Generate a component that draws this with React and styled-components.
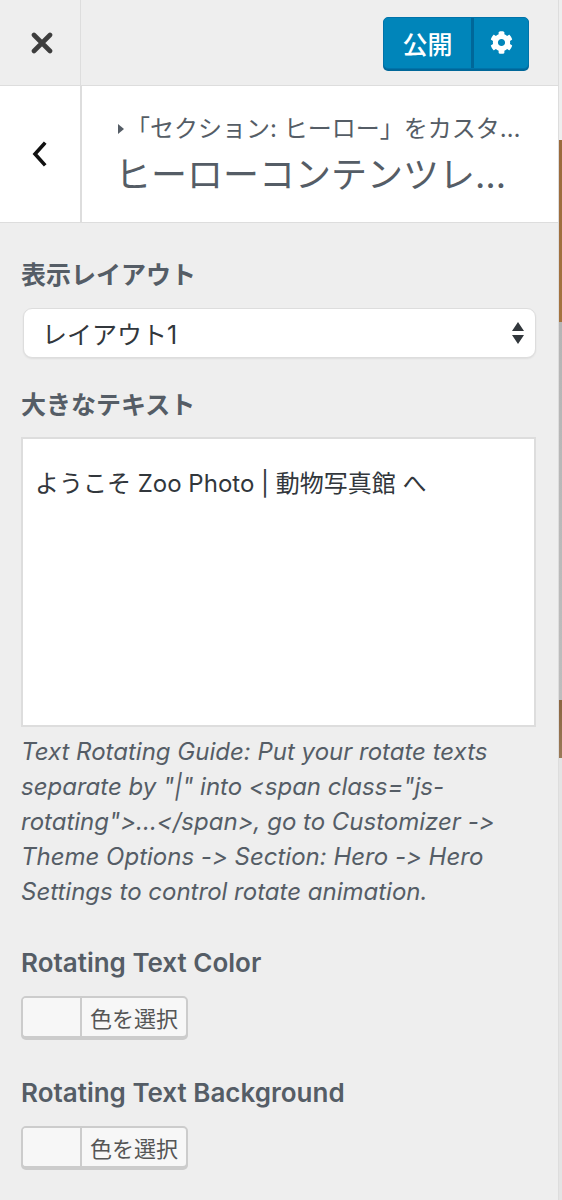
import styled, { createGlobalStyle } from "styled-components";
import { FaCog } from "react-icons/fa";

const GlobalStyle = createGlobalStyle`
  html, body {
    margin: 0;
    padding: 0;
    background: #eee;
  }
  body {
    font-family: "Inter", "Noto Sans CJK JP", sans-serif;
    font-feature-settings: "calt" 0, "liga" 0;
    color: #555d66;
  }
`;

const Screen = styled.div`
  display: flex;
  width: 562px;
  min-height: 1200px;
`;

const Panel = styled.div`
  width: 558px;
  border-right: 1px solid #ddd;
  background: #eee;
  display: flex;
  flex-direction: column;
`;

const PreviewEdge = styled.div`
  flex: 1;
  background: linear-gradient(
    to bottom,
    #eee 0,
    #eee 140px,
    #9a6a3c 140px,
    #a4733f 322px,
    #b5b5b5 322px,
    #bdbdbd 700px,
    #8a6540 700px,
    #9a7a58 758px,
    #e4e4e4 758px
  );
`;

const Header = styled.div`
  height: 85px;
  display: flex;
  align-items: center;
  border-bottom: 1px solid #ddd;
`;

const CloseButton = styled.div`
  width: 81px;
  height: 100%;
  border-right: 1px solid #ddd;
  display: flex;
  align-items: center;
  justify-content: center;
  padding-left: 3px;
  box-sizing: border-box;
  svg {
    display: block;
  }
`;

const PublishGroup = styled.div`
  margin-left: auto;
  margin-right: 29px;
  display: flex;
  height: 52px;
  border-radius: 5px;
  background: #0085ba;
  border: 1px solid #0073aa;
  box-shadow: 0 2px 0 #006799;
  box-sizing: border-box;
  overflow: hidden;
`;

const PublishButton = styled.div`
  width: 87px;
  display: flex;
  align-items: center;
  justify-content: center;
  color: #fff;
  font-size: 25px;
  font-weight: 500;
  border-right: 3px solid #006799;
`;

const GearButton = styled.div`
  width: 54px;
  display: flex;
  align-items: center;
  justify-content: center;
  color: #fff;
  font-size: 23px;
`;

const SectionHeader = styled.div`
  height: 136px;
  display: flex;
  background: #fff;
  border-bottom: 1px solid #ddd;
`;

const BackButton = styled.div`
  width: 80px;
  flex: none;
  border-right: 2px solid #ddd;
  display: flex;
  align-items: center;
  justify-content: center;
`;

const TitleBlock = styled.div`
  flex: 1;
  min-width: 0;
  padding: 24px 28px 0 33px;
`;

const Crumb = styled.div`
  display: flex;
  align-items: center;
  font-size: 24px;
  line-height: 38px;
  color: #555d66;
  white-space: nowrap;
  &::before {
    content: "";
    flex: none;
    border-left: 6px solid #555d66;
    border-top: 5px solid transparent;
    border-bottom: 5px solid transparent;
    margin: 0 2px 0 3px;
  }
  span {
    overflow: hidden;
    text-overflow: ellipsis;
  }
`;

const Title = styled.h3`
  margin: 0;
  padding-right: 12px;
  font-size: 36px;
  line-height: 54px;
  font-weight: 400;
  color: #555d66;
  white-space: nowrap;
  overflow: hidden;
  text-overflow: ellipsis;
`;

const Content = styled.div`
  padding: 30px 22px 40px 21px;
`;

const ControlTitle = styled.div`
  font-size: ${(p) => (p.$latin ? "26px" : "25px")};
  line-height: 44px;
  font-weight: 600;
  color: #555d66;
  margin-top: ${(p) => p.$top || 0}px;
`;

const SelectBox = styled.div`
  margin: 11px 0 0 2px;
  height: 50px;
  box-sizing: border-box;
  background: #fff;
  border: 1px solid #ddd;
  border-radius: 9px;
  box-shadow: 0 1px 2px rgba(0, 0, 0, 0.07);
  display: flex;
  align-items: center;
  padding: 0 10px 0 18px;
  font-size: 25px;
  color: #32373c;
  svg {
    margin-left: auto;
  }
`;

const TextArea = styled.div`
  margin-top: 10px;
  height: 290px;
  box-sizing: border-box;
  background: #fff;
  border: 2px solid #ddd;
  padding: 30px 12px;
  font-size: 24px;
  line-height: 30px;
  color: #32373c;
`;

const Description = styled.p`
  margin: 7px 0 0;
  font-size: 24px;
  line-height: 35px;
  font-style: italic;
  color: #555d66;
`;

const ColorPicker = styled.div`
  margin-top: 11px;
  display: inline-flex;
  height: 42px;
  box-sizing: border-box;
  background: #f7f7f7;
  border: 2px solid #ccc;
  border-radius: 5px;
  box-shadow: 0 2px 0 #ccc;
  overflow: hidden;
`;

const Swatch = styled.div`
  width: 57px;
  border-right: 2px solid #ccc;
  background: #f7f7f7;
`;

const PickLabel = styled.div`
  width: 104px;
  display: flex;
  align-items: center;
  justify-content: center;
  font-size: 22px;
  color: #555;
`;

const Field = styled.div`
  display: flex;
  flex-direction: column;
  align-items: ${(p) => (p.$inline ? "flex-start" : "stretch")};
`;

function CloseIcon() {
  return (
    <svg width="22" height="22" viewBox="0 0 22 22">
      <path d="M3 3 L19 19 M19 3 L3 19" stroke="#3d3d3d" strokeWidth="4.6" strokeLinecap="round" />
    </svg>
  );
}

function BackIcon() {
  return (
    <svg width="18" height="26" viewBox="0 0 18 26">
      <path d="M13 3 L4 13 L13 23" fill="none" stroke="#111" strokeWidth="3.6" strokeLinecap="square" />
    </svg>
  );
}

function SelectArrows() {
  return (
    <svg width="14" height="24" viewBox="0 0 14 24">
      <path d="M7 1 L13 10 L1 10 Z M1 14 L13 14 L7 23 Z" fill="#32373c" />
    </svg>
  );
}

function ColorControl({ label, top }) {
  return (
    <Field $inline>
      <ControlTitle $latin $top={top}>{label}</ControlTitle>
      <ColorPicker>
        <Swatch />
        <PickLabel>色を選択</PickLabel>
      </ColorPicker>
    </Field>
  );
}

export default function App() {
  return (
    <Screen>
      <GlobalStyle />
      <Panel>
        <Header>
          <CloseButton>
            <CloseIcon />
          </CloseButton>
          <PublishGroup>
            <PublishButton>公開</PublishButton>
            <GearButton>
              <FaCog />
            </GearButton>
          </PublishGroup>
        </Header>

        <SectionHeader>
          <BackButton>
            <BackIcon />
          </BackButton>
          <TitleBlock>
            <Crumb>
              <span>「セクション: ヒーロー」をカスタマイズ中</span>
            </Crumb>
            <Title>ヒーローコンテンツレイアウト</Title>
          </TitleBlock>
        </SectionHeader>

        <Content>
          <Field>
            <ControlTitle>表示レイアウト</ControlTitle>
            <SelectBox>
              レイアウト1
              <SelectArrows />
            </SelectBox>
          </Field>

          <Field>
            <ControlTitle $top={25}>大きなテキスト</ControlTitle>
            <TextArea>ようこそ Zoo Photo | 動物写真館 へ</TextArea>
            <Description>
              Text Rotating Guide: Put your rotate texts separate by "|" into
              &lt;span class="js-rotating"&gt;...&lt;/span&gt;, go to Customizer
              -&gt; Theme Options -&gt; Section: Hero -&gt; Hero Settings to
              control rotate animation.
            </Description>
          </Field>

          <ColorControl label="Rotating Text Color" top={32} />
          <ColorControl label="Rotating Text Background" top={33} />
        </Content>
      </Panel>
      <PreviewEdge />
    </Screen>
  );
}
